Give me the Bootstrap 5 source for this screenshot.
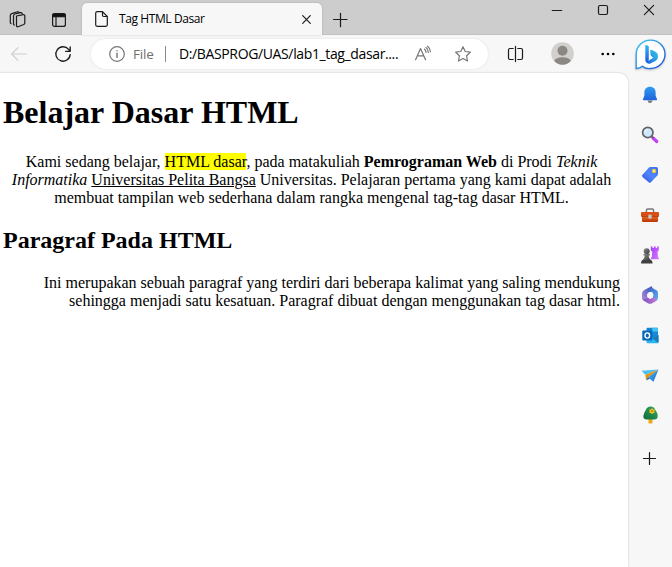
<!DOCTYPE html>
<html lang="id">
<head>
<meta charset="utf-8">
<meta name="viewport" content="width=device-width, initial-scale=1">
<title>Tag HTML Dasar</title>
<link href="https://cdn.jsdelivr.net/npm/bootstrap@5.3.0/dist/css/bootstrap.min.css" rel="stylesheet">
<style>
body{background:#f7f7f7;color:#000;font-family:"Open Sans","Noto Sans",sans-serif}
svg{display:block;flex:none;overflow:visible}
.ln{fill:none;stroke:#1b1b1b;stroke-width:1.2;stroke-linecap:round;stroke-linejoin:round}
.gy{stroke:#767676}
.faint{stroke:#cfcfcf}
.bold-ln{stroke-width:1.35}
.tabstrip{height:35px;background:#cdcdcd;box-shadow:inset 0 -1px 0 #c1c1c1}
.cell-a{width:34px}.cell-b{width:48px;padding-left:2px}
.browser-tab{width:240px;height:32px;margin-top:3px;background:#f7f7f7;border-radius:5px 5px 0 0;padding:0 7px 0 13px;font-size:12px;box-shadow:0 0 2px rgba(0,0,0,.22)}
.tab-title{margin-left:11px;letter-spacing:-.4px;line-height:16px}
.new-tab{width:35px}
.win-ctl{width:46px;height:20px}
.main-col{width:628px}
.toolbar{height:38px;padding-bottom:1px}
.back{width:38px}.reload{width:50px}
.address{width:397px;height:30px;margin-left:3px;background:#fff;border-radius:15px;box-shadow:0 0 3px rgba(0,0,0,.09);padding-left:18px;font-size:14px;line-height:20px}
.scheme{color:#707070;font-size:13.5px;width:22px;margin-left:8px;letter-spacing:-.2px}
.rule{width:1px;height:16px;background:#8b8b8b;margin-left:10px}
.url{width:220px;margin-left:13px;letter-spacing:-.37px}
.split{width:55px;padding-left:1px}.avatar{width:38px}.dots{width:47px;padding-left:7px}
.page{background:#fff;border-radius:0 9px 0 0;box-shadow:0 0 2px rgba(0,0,0,.25);padding:21px 8px 0 3px;font:16px/18px "Liberation Serif","Times New Roman",serif;clip-path:inset(-3px -3px 0 0)}
.page h1{font:bold 32px/37px "Liberation Serif",serif;margin:0 0 22px}
.page h2{font:bold 24px/27px "Liberation Serif",serif;margin:20px 0}
.page p{margin:0}
.hl{background:#ff0}
.sidebar{width:44px}
.side-item{height:40px}
.bing-slot{height:40px;padding-bottom:2px}
.bubble{filter:drop-shadow(0 1px 1px rgba(0,0,0,.2))}
.add-slot{height:46px}
</style>
<script src="https://cdn.jsdelivr.net/npm/bootstrap@5.3.0/dist/js/bootstrap.bundle.min.js"></script>
</head>
<body class="vh-100 overflow-hidden d-flex flex-column">
<svg width="0" height="0" class="position-absolute">
<defs>
<linearGradient id="bl" x1="0" y1="0" x2="1" y2="1"><stop stop-color="#35c9ee"/><stop offset="1" stop-color="#1d4fd6"/></linearGradient>
<linearGradient id="bb" x1="0" y1="0" x2="0" y2="1"><stop stop-color="#35b8f2"/><stop offset="1" stop-color="#1b55e0"/></linearGradient>
<linearGradient id="bc" x1="1" y1="0" x2="0" y2="1"><stop stop-color="#35d0ea"/><stop offset="1" stop-color="#1d62e0"/></linearGradient>
<linearGradient id="bell" x1="0" y1="0" x2="0" y2="1"><stop stop-color="#2f9bf0"/><stop offset="1" stop-color="#1f62dc"/></linearGradient>
<linearGradient id="tag" x1="1" y1="0" x2="0" y2="1"><stop stop-color="#3d6ef5"/><stop offset=".5" stop-color="#4f86fa"/><stop offset="1" stop-color="#2b50df"/></linearGradient>
<linearGradient id="box" x1="0" y1="0" x2="0" y2="1"><stop stop-color="#e8661e"/><stop offset="1" stop-color="#b93508"/></linearGradient>
<linearGradient id="pawn" x1="0" y1="0" x2="1" y2="1"><stop stop-color="#888"/><stop offset="1" stop-color="#3c3c3c"/></linearGradient>
<linearGradient id="rook" x1="0" y1="0" x2="1" y2="1"><stop stop-color="#a23bf5"/><stop offset="1" stop-color="#dc7bff"/></linearGradient>
<linearGradient id="tree" x1="1" y1="0" x2="0" y2="1"><stop stop-color="#31ad62"/><stop offset="1" stop-color="#106b3a"/></linearGradient>
<linearGradient id="pl" x1="0" y1="0" x2="1" y2="1"><stop stop-color="#4dbdf6"/><stop offset="1" stop-color="#1765cf"/></linearGradient>
<linearGradient id="m1" x1="1" y1="0" x2="0" y2="1"><stop stop-color="#3f4bb0"/><stop offset="1" stop-color="#a98be0"/></linearGradient>
<linearGradient id="m2" x1="0" y1="0" x2="1" y2="0"><stop stop-color="#7a4fc0"/><stop offset="1" stop-color="#c07ad8"/></linearGradient>
<linearGradient id="m3" x1="0" y1="0" x2="1" y2="1"><stop stop-color="#3a5fc9"/><stop offset="1" stop-color="#5cb4ee"/></linearGradient>
</defs>
</svg>

<header class="tabstrip d-flex flex-shrink-0">
  <div class="cell-a d-flex align-items-center justify-content-center pt-1">
    <svg width="17" height="17" viewBox="0 0 17 17" class="ln"><path d="M7.500 5l6.800-1.300q1.500-.2 1.500 1.200v7q0 1.100-1.100 1.600l-5.700 2.200q-1.500.4-1.500-1.100z"/><path d="M4.500 12.800V5q0-1.600 1.400-2l5.600-1.300q1.200-.2 1.700.8M1.300 11.500v-7q0-1.400 1.400-1.900L8.500.8q1-.2 1.500.4M1.300 11.500q0 .9.800 1.200M4.500 12.800q0 1 .8 1.300"/></svg>
  </div>
  <div class="cell-b d-flex align-items-center justify-content-center pt-1">
    <svg width="14" height="14" viewBox="0 0 14 14" class="ln"><rect x=".6" y=".6" width="12.800" height="12.800" rx="2"/><path d="M1 1h12v2.600H1z" fill="#111"/><path d="M4 4v9"/></svg>
  </div>
  <div class="browser-tab d-flex align-items-center">
    <svg width="13" height="16" viewBox="0 0 13 16" class="ln"><path d="M7.500.7H2.200Q.7.7.7 2.200v11.600q0 1.500 1.500 1.500h8.600q1.500 0 1.500-1.500V5.500zM7.500.7v3.600q0 1.200 1.200 1.200h3.600"/></svg>
    <span class="tab-title text-nowrap">Tag HTML Dasar</span>
    <svg width="9" height="9" viewBox="0 0 9 9" class="ln ms-auto me-1"><path d="M.7.7l7.600 7.600M8.300.7L.7 8.300"/></svg>
  </div>
  <div class="new-tab d-flex align-items-center justify-content-center pt-1">
    <svg width="14" height="14" viewBox="0 0 14 14" class="ln"><path d="M7.500.3v13.400M.5 6.500h13.500"/></svg>
  </div>
  <div class="d-flex ms-auto">
    <div class="win-ctl d-flex align-items-center justify-content-center"><svg width="10" height="10" viewBox="0 0 10 10" class="ln"><path d="M.3 5.500h9.400"/></svg></div>
    <div class="win-ctl d-flex align-items-center justify-content-center"><svg width="10" height="10" viewBox="0 0 10 10" class="ln"><rect x=".5" y=".5" width="9" height="9" rx="1.500"/></svg></div>
    <div class="win-ctl d-flex align-items-center justify-content-center"><svg width="10" height="10" viewBox="0 0 10 10" class="ln"><path d="M.4.4l9.200 9.200M9.600.4L.4 9.600"/></svg></div>
  </div>
</header>

<div class="d-flex flex-grow-1">
  <div class="main-col d-flex flex-column flex-shrink-0">
    <nav class="toolbar d-flex align-items-center flex-shrink-0">
      <div class="back d-flex justify-content-center"><svg width="16" height="14" viewBox="0 0 16 14" class="ln faint"><path d="M7 .7L.7 7 7 13.300M.7 7h14.800"/></svg></div>
      <div class="reload d-flex justify-content-center"><svg width="16" height="16" viewBox="0 0 16 16" class="ln bold-ln"><path d="M15.200 8.600A7.200 7.200 0 1 1 13.600 3.400L15 5.200M15.200.8v4.500h-4.600"/></svg></div>
      <div class="address d-flex align-items-center">
        <svg width="16" height="16" viewBox="0 0 16 16" class="ln gy"><circle cx="8" cy="8" r="7.300"/><path d="M8 7.200v4.200M8 4.600v.2" stroke-width="1.400"/></svg>
        <span class="scheme text-nowrap">File</span>
        <span class="rule"></span>
        <span class="url text-nowrap">D:/BASPROG/UAS/lab1_tag_dasar....</span>
        <svg width="16" height="15" viewBox="0 0 16 15" class="ln gy ms-3"><path d="M.6 13.800L5.500 2.500l5 11.300M2.400 9.800h6.400M9.500 3.200q1.500 1.300 1.600 3.200M11 1.500q2.200 1.600 2.300 5M12.600.2q2.700 2 2.800 5.500"/></svg>
        <svg width="16" height="16" viewBox="0 0 16 16" class="ln gy ms-4"><path d="M8 .8l2.200 4.700 5.100.7-3.700 3.600.9 5.200L8 12.500 3.500 15l.9-5.200L.7 6.200l5.100-.7z"/></svg>
      </div>
      <div class="split d-flex justify-content-center"><svg width="16" height="16" viewBox="0 0 16 16" class="ln"><path d="M5.200 2.500H2Q.5 2.500.5 4v8q0 1.500 1.500 1.500h3.200M9.800 2.500H13q1.500 0 1.500 1.500v8q0 1.500-1.500 1.500H9.800M7.500.4v15.200"/></svg></div>
      <div class="avatar d-flex justify-content-center"><svg width="23" height="23" viewBox="0 0 23 23"><circle cx="11.500" cy="11.500" r="11.300" fill="#d2d0cd"/><circle cx="11.500" cy="8.800" r="5" fill="#8b8783"/><path d="M3.200 19Q4.800 15.400 11.500 15.300q6.700.1 8.300 3.700a11.200 11.200 0 0 1-16.600 0z" fill="#8b8783"/></svg></div>
      <div class="dots d-flex justify-content-center"><svg width="14" height="4" viewBox="0 0 14 4"><circle cx="1.700" cy="2" r="1.300"/><circle cx="7" cy="2" r="1.300"/><circle cx="12.300" cy="2" r="1.300"/></svg></div>
    </nav>
    <main class="page flex-grow-1">
      <h1>Belajar Dasar HTML</h1>
      <p class="text-center">Kami sedang belajar, <span class="hl">HTML dasar</span>, pada matakuliah <b>Pemrograman Web</b> di Prodi <i>Teknik Informatika</i> <u>Universitas Pelita Bangsa</u> Universitas. Pelajaran pertama yang kami dapat adalah membuat tampilan web sederhana dalam rangka mengenal tag-tag dasar HTML.</p>
      <h2>Paragraf Pada HTML</h2>
      <p class="text-end">Ini merupakan sebuah paragraf yang terdiri dari beberapa kalimat yang saling mendukung sehingga menjadi satu kesatuan. Paragraf dibuat dengan menggunakan tag dasar html.</p>
    </main>
  </div>
  <aside class="sidebar d-flex flex-column align-items-center">
    <div class="bing-slot d-flex align-items-center"><svg width="31" height="31" viewBox="0 0 31 31"><path class="bubble" d="M1.200 29.500V15.300A14.400 14.200 0 1 1 15.600 29.500Q10 30 7.500 27.300 5 29.500 1.200 29.500z" fill="#fff" stroke="url(#bl)" stroke-width="1.400"/><path d="M10.300 6.500q0-.7.8-.5l2 .8q.7.3.7 1v12.500q0 2.800-1.600 3.800-1.900-.5-1.900-3z" fill="url(#bb)"/><path d="M15.300 11.600q-.2-1 .8-.8l3.500 1.500q3.500 1.500 3.500 5.200 0 2.600-2.200 4.200l-5.600 2.700q-2 .8-3.200-.3-.7-1.200 1.300-2.300l5-3-1.700-1.300q-1-.8-1.200-2z" fill="url(#bc)"/></svg></div>
    <div class="side-item d-flex align-items-center"><svg width="16" height="18" viewBox="0 0 16 18"><path d="M5.500 14.500h5q-.5 2.500-2.500 2.500t-2.500-2.500z" fill="#777"/><path d="M8 .8c3.500 0 5.600 2.400 5.600 5.500v3.200l1.500 4q.2.800-.7.800H1.600q-.9 0-.7-.8l1.500-4V6.300C2.400 3.200 4.500.8 8 .8z" fill="url(#bell)"/></svg></div>
    <div class="side-item d-flex align-items-center"><svg width="18" height="18" viewBox="0 0 18 18"><path d="M12 12l3.800 3.500" stroke="#c441f2" stroke-width="3.200" stroke-linecap="round"/><path d="M10 10l2.300 2.100" stroke="#555" stroke-width="1.600"/><circle cx="6.800" cy="6.500" r="5.200" fill="#cde8fa" stroke="#646464" stroke-width="1.700"/><path d="M3.800 6q.5-2.300 2.800-2.600" fill="none" stroke="#fff"/></svg></div>
    <div class="side-item d-flex align-items-center"><svg width="18" height="18" viewBox="0 0 18 18"><path d="M9.100 1h6.200q1.700 0 1.700 1.700v5.400q0 .9-.6 1.500l-6.500 6.600q-1.100 1-2.200 0L1.500 11q-1.100-1.200 0-2.300L8 1.500q.5-.5 1.100-.5z" fill="url(#tag)"/><circle cx="13" cy="5" r="1.600" fill="#f4f4e4" stroke="#f2c729" stroke-width="1.200"/></svg></div>
    <div class="side-item d-flex align-items-center"><svg width="18" height="16" viewBox="0 0 18 16"><path d="M5.400 6V3.400Q5.400 2 6.800 2h4.400q1.400 0 1.400 1.400V6" fill="none" stroke="#777" stroke-width="1.500"/><rect y="5" width="18" height="4.700" rx="1" fill="#d94e12"/><path d="M1 9.500h16v4.200q0 1.300-1.300 1.300H2.300Q1 15 1 13.700z" fill="url(#box)"/><path d="M.5 9.500h17" stroke="#9a3210" stroke-width=".7"/><rect x="7.200" y="7.600" width="3.600" height="4.200" rx="1.200" fill="#c7c3c1"/></svg></div>
    <div class="side-item d-flex align-items-center"><svg width="18" height="18" viewBox="0 0 18 18"><path d="M9.800.5h1.700v1.400h1.400V.5h1.800v1.400h1.400V.5h1.700v4l-1.300 1.200.5 5.200.9 1v1.400H10V12l.9-1 .4-5.300-1.500-1.200z" fill="url(#rook)"/><circle cx="5.700" cy="5.300" r="3" fill="url(#pawn)"/><path d="M2.500 8h6.400v1.500H7.600q.1 3 2.400 4.800H1.400q2.300-1.800 2.400-4.800H2.500z" fill="url(#pawn)"/><path d="M1.300 14h8.800q1.500 1.200 1.500 3.500H0Q0 15.200 1.300 14z" fill="#404040"/></svg></div>
    <div class="side-item d-flex align-items-center"><svg width="18" height="18" viewBox="0 0 18 18"><path d="M10.600.3L4.200 3.500Q1 5.200 1 8.200v3.600q0 2 2.800 1.400L6.200 11V7.800l5-2.800V1.200q0-.9-.6-.9z" fill="url(#m1)"/><path d="M9.500 1l6 3.200q1.500.9 1.500 2.600v5q0 2.500-2.300 3L12 12.800V7.500L9.500 5.800 7.400 7Q7 2.500 9.500 1z" fill="url(#m3)"/><path d="M1.200 12.300q1.300 1.600 3 .3l2-1.400 3 1.800 2.800-1.600q2.500-.4 3.800 2.900-.3.500-1 .9l-4 2.200q-1.800.9-3.500 0l-4.900-2.800q-1.100-.8-1.200-2.300z" fill="url(#m2)"/><path d="M7.800 6h3.300l1.500 3-1.500 3H7.500L6 9.300z" fill="#f7f7f7"/></svg></div>
    <div class="side-item d-flex align-items-center"><svg width="17" height="17" viewBox="0 0 17 17"><rect x="4.500" y=".8" width="11.500" height="11" rx="1" fill="#1685d2"/><path d="M10.300.8H15q1 0 1 1v3h-5.700z" fill="#41c4ef"/><path d="M10.300 4.800H16v4h-5.700z" fill="#1688d5"/><path d="M4.500 8.500l6 3 6-3.500v7q0 1.200-1.200 1.200H5.700q-1.200 0-1.200-1.200z" fill="#29b4ed"/><path d="M10.500 11.500l6-3.500v7.800z" fill="#1679b8"/><rect x=".3" y="3.500" width="10" height="10" rx="1" fill="#0868b8"/><ellipse cx="5.300" cy="8.500" rx="2.300" ry="2.600" fill="none" stroke="#fff" stroke-width="1.400"/></svg></div>
    <div class="side-item d-flex align-items-center"><svg width="18" height="15" viewBox="0 0 18 15"><path d="M17.500 1.500L.5 2.800l3.800 4z" fill="#4dbdf6"/><path d="M17.500 1.500L4.300 6.800l.8 5.500 2.600-2.800z" fill="#e19615"/><path d="M17.500 1.500L7 9.500l5.500 4.200z" fill="url(#pl)"/><path d="M7 9.500l-1.900 2.800 3.700-1.500z" fill="#1557ae"/></svg></div>
    <div class="side-item d-flex align-items-center"><svg width="15" height="18" viewBox="0 0 15 18"><path d="M5.500 12h4v4.700q0 .7-.7.700H6.200q-.7 0-.7-.7z" fill="#f0a51d"/><path d="M7.500.5c2.800 0 3.900 1.500 4.800 3.500 1.600 1.800 2.500 4.200 2.400 6.300Q14.500 13.500 11.300 13.500H3.700Q.5 13.500.3 10.300.3 7.800 2.800 4 4 .5 7.500.5z" fill="url(#tree)"/><path d="M9 2l1.100 1.400 1.700.2-.5 1.500.5 1.600-1.700.2L9 8.200 7.900 6.900 6.200 6.700l.5-1.600-.5-1.500 1.700-.2z" fill="#f6c21b"/><circle cx="9" cy="5.100" r=".9" fill="#bd6915"/></svg></div>
    <div class="add-slot d-flex align-items-center"><svg width="12" height="12" viewBox="0 0 12 12" class="ln"><path d="M5.500.5v12M-.5 6.500h12"/></svg></div>
  </aside>
</div>
</body>
</html>
